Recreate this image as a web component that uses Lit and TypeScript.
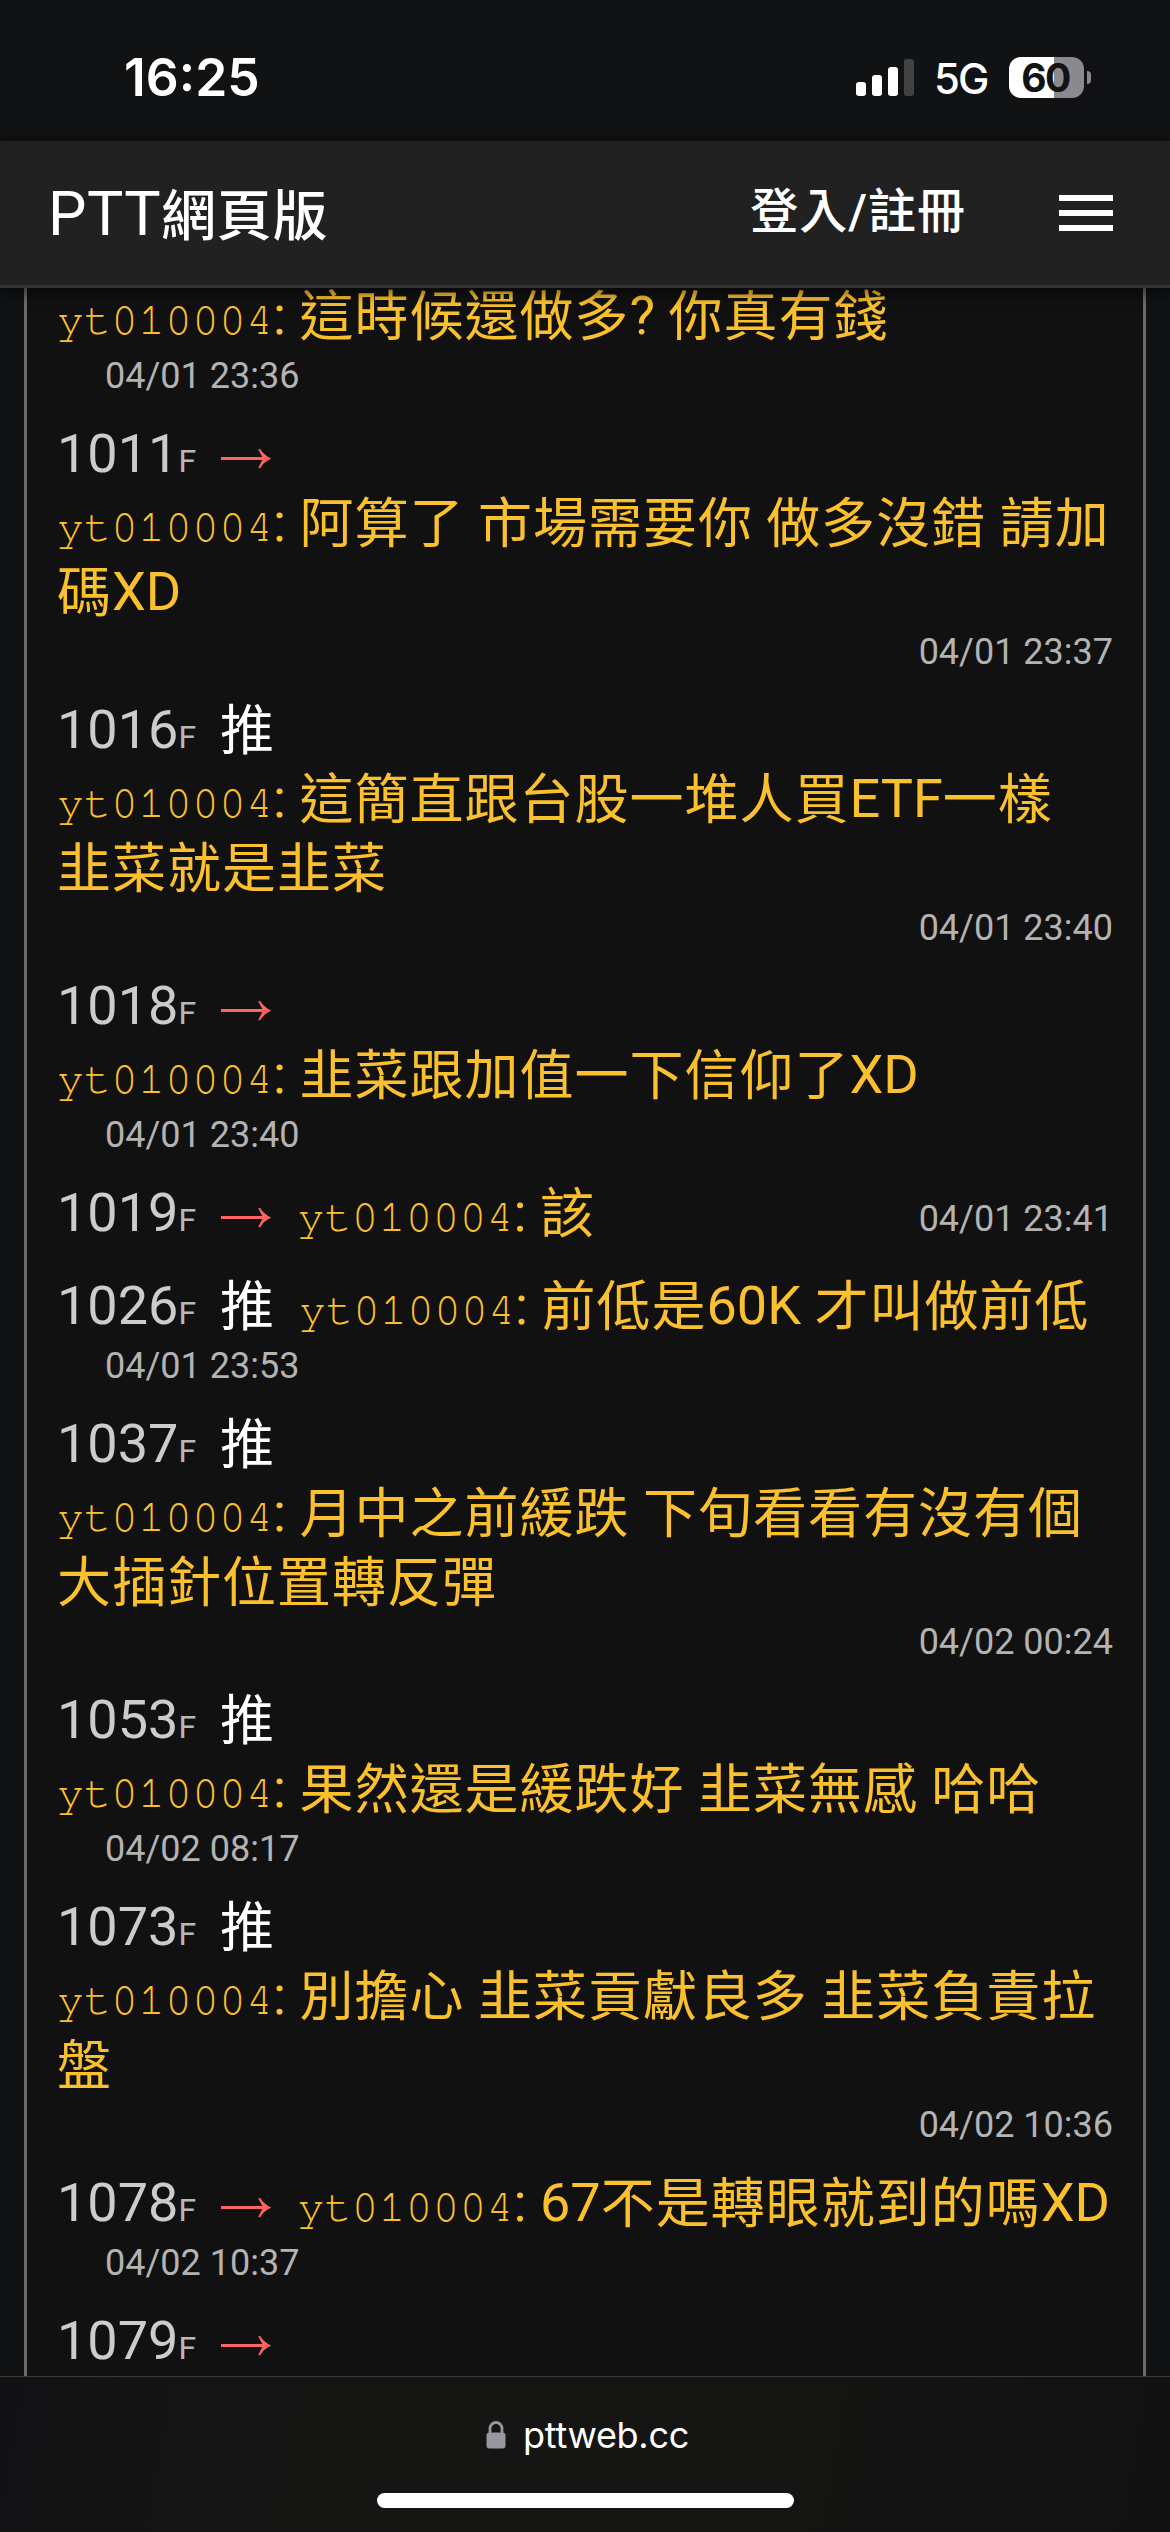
import { LitElement, html, css, svg } from "lit";
import { customElement, property } from "lit/decorators.js";
import { classMap } from "lit/directives/class-map.js";

type Entry = { floor?: string; kind?: "push" | "arrow"; inline?: boolean; lines: string[]; date: string; dateAt: "left" | "right" | "same" };

const USER = "yt010004";
const ENTRIES: Entry[] = [
  { lines: ["這時候還做多? 你真有錢"], date: "04/01 23:36", dateAt: "left" },
  { floor: "1011", kind: "arrow", lines: ["阿算了 市場需要你 做多沒錯 請加", "碼XD"], date: "04/01 23:37", dateAt: "right" },
  { floor: "1016", kind: "push", lines: ["這簡直跟台股一堆人買ETF一樣", "韭菜就是韭菜"], date: "04/01 23:40", dateAt: "right" },
  { floor: "1018", kind: "arrow", lines: ["韭菜跟加值一下信仰了XD"], date: "04/01 23:40", dateAt: "left" },
  { floor: "1019", kind: "arrow", inline: true, lines: ["該"], date: "04/01 23:41", dateAt: "same" },
  { floor: "1026", kind: "push", inline: true, lines: ["前低是60K 才叫做前低"], date: "04/01 23:53", dateAt: "left" },
  { floor: "1037", kind: "push", lines: ["月中之前緩跌 下旬看看有沒有個", "大插針位置轉反彈"], date: "04/02 00:24", dateAt: "right" },
  { floor: "1053", kind: "push", lines: ["果然還是緩跌好 韭菜無感 哈哈"], date: "04/02 08:17", dateAt: "left" },
  { floor: "1073", kind: "push", lines: ["別擔心 韭菜貢獻良多 韭菜負責拉", "盤"], date: "04/02 10:36", dateAt: "right" },
  { floor: "1078", kind: "arrow", inline: true, lines: ["67不是轉眼就到的嗎XD"], date: "04/02 10:37", dateAt: "left" },
  { floor: "1079", kind: "arrow", lines: [], date: "", dateAt: "left" },
];

/* Han runs are tracked slightly wider than the Latin text around them. */
const tracked = (text: string) =>
  text.split(/([\u4e00-\u9fff]+)/).filter(Boolean).map((run) =>
    /[\u4e00-\u9fff]/.test(run) ? html`<span class="han">${run}</span>` : run);

@customElement("status-bar")
class StatusBar extends LitElement {
  static styles = css`
    :host { display: flex; justify-content: space-between; height: 141px; box-sizing: border-box; padding: 57px 79px 0 124px; color: #fff; font-family: Inter, "Liberation Sans", sans-serif; }
    .time { font-size: 51.5px; font-weight: 600; line-height: 41px; }
    .right { display: flex; align-items: flex-start; }
    .signal { display: block; margin-right: 20px; }
    .net { width: 75px; font-size: 42px; font-weight: 500; line-height: 44px; letter-spacing: -2px; }
    .battery { display: flex; align-items: center; gap: 3px; }
    .cell { width: 75px; height: 41px; border-radius: 12px; background: linear-gradient(90deg, #fff 45px, #8a8a8c 45px); color: #111315; font-size: 39px; font-weight: 700; line-height: 41px; text-align: center; letter-spacing: -1.5px; text-indent: -2px; }
    .nub { width: 4px; height: 13px; border-radius: 0 4px 4px 0; background: #8a8a8c; }
  `;
  render() {
    const bars = [[0, 23, 14], [16, 16, 21], [32, 8, 29], [48, 0, 37]];
    return html`
      <div class="time">16:25</div>
      <div class="right">
        <svg class="signal" width="58" height="41" viewBox="0 -2 58 41">
          ${bars.map(([x, y, h], i) => svg`<rect x=${x} y=${y} width="10" height=${h} rx="3" fill=${i === 3 ? "#414244" : "#fff"}></rect>`)}
        </svg>
        <div class="net">5G</div>
        <div class="battery"><div class="cell">60</div><div class="nub"></div></div>
      </div>`;
  }
}

@customElement("site-header")
class SiteHeader extends LitElement {
  static styles = css`
    :host { display: flex; align-items: center; position: relative; z-index: 1; box-sizing: border-box; height: 147px; padding: 0 57px 0 48px; background: #212121; border-bottom: 3px solid #333; box-shadow: 0 3px 14px 2px rgba(0, 0, 0, 0.55); color: #fff; font-family: Roboto, "Noto Sans CJK TC", sans-serif; }
    .title { flex: 1; font-size: 61px; line-height: 70px; letter-spacing: 0.4px; padding-top: 2px; }
    .title .han { font-size: 55px; letter-spacing: 0.8px; font-weight: 500; line-height: 0; }
    .login { font-size: 48px; line-height: 56px; letter-spacing: 1px; font-weight: 500; padding-bottom: 3px; margin-right: 93px; }
    .menu { display: flex; flex-direction: column; gap: 9px; }
    .menu i { width: 54px; height: 6px; background: #fff; }
  `;
  render() {
    return html`
      <div class="title">PTT<span class="han">網頁版</span></div>
      <div class="login">登入/註冊</div>
      <div class="menu"><i></i><i></i><i></i></div>`;
  }
}

@customElement("comment-entry")
class CommentEntry extends LitElement {
  @property({ attribute: false }) entry!: Entry;
  static styles = css`
    :host { display: block; padding-bottom: 23px; }
    .line { display: flex; align-items: baseline; height: 69px; line-height: 69px; white-space: pre; color: #fbc02d; }
    .line.single { height: 70px; }
    .floor { width: 163px; color: #ccc; }
    .floor small { font-size: 32px; color: #b8b8b8; line-height: 0; }
    .tag { width: 79px; color: #fff; }
    .arrow { display: block; width: 52px; height: 23px; margin-right: 25.5px; }
    .user { width: 216px; font-family: FreeMono, "Liberation Mono", monospace; font-size: 45px; line-height: 0; }
    .han { letter-spacing: 1px; line-height: 0; vertical-align: -1.5px; }
    .date { color: #b3b3b3; font-size: 36px; line-height: 52px; height: 46px; }
    .left { padding-left: 48px; }
    .right { text-align: right; }
    .same { margin-left: auto; line-height: 0; height: auto; }
  `;
  render() {
    const e = this.entry;
    const single = e.dateAt === "same";
    const name = html`<span class="user">${USER}</span><span>: ${tracked(e.lines[0] ?? "")}</span>`;
    const tag = e.kind === "push"
      ? html`<span class="tag"><span class="han">推</span></span>`
      : html`<svg class="arrow" viewBox="0 0 52 23" role="img" aria-label="→">
          <path d="M1 8.1H42.3L38.2 0.2L40.2 0Q43.8 6.2 51.2 9.6Q43.8 13 40.2 19.2L38.2 19L42.3 11.1H1Z" fill="#ff6464"></path>
        </svg>`;
    return html`
      ${e.floor ? html`<div class=${classMap({ line: true, single })}><span class="floor">${e.floor}<small>F</small></span>${tag}${e.inline ? name : ""}${single ? html`<span class="date same">${e.date}</span>` : ""}</div>` : ""}
      ${!e.inline && e.lines.length ? html`<div class="line">${name}</div>` : ""}
      ${e.lines.slice(1).map((l) => html`<div class="line"><span>${tracked(l)}</span></div>`)}
      ${single ? "" : html`<div class="date ${e.dateAt}">${e.date}</div>`}`;
  }
}

@customElement("browser-bar")
class BrowserBar extends LitElement {
  static styles = css`
    :host { display: flex; flex-direction: column; align-items: center; position: relative; z-index: 1; box-sizing: border-box; height: 156px; padding-top: 35px; border-top: 1px solid #3a3a3b; background: linear-gradient(100deg, #121214, #151515 20%, #151513 60%, #121214); color: #fff; font-family: Inter, "Liberation Sans", sans-serif; }
    .url { display: flex; align-items: center; gap: 17px; height: 46px; font-size: 36px; line-height: 46px; letter-spacing: -0.3px; padding-left: 5px; }
    .home { width: 417px; height: 15px; border-radius: 8px; background: #fff; margin-top: 35px; }
  `;
  render() {
    return html`
      <div class="url">
        <svg width="20" height="28" viewBox="0 0 20 28">
          <rect x="0.5" y="11.5" width="19" height="16" rx="3" fill="#98979d"></rect>
          <path d="M4 13V7.5a6 6 0 0 1 12 0V13" fill="none" stroke="#98979d" stroke-width="2.8"></path>
        </svg>
        <span>pttweb.cc</span>
      </div>
      <div class="home"></div>`;
  }
}

@customElement("app-root")
class AppRoot extends LitElement {
  static styles = css`
    :host { display: flex; flex-direction: column; width: 1170px; height: 2532px; overflow: hidden; background: #101214; }
    .scroll { flex: 1; min-height: 0; overflow: hidden; display: flex; justify-content: center; }
    .list { box-sizing: border-box; width: 1122px; height: 2400px; margin-top: -7px; padding: 0 30px; border: 0 solid #6b6b6b; border-width: 0 3px; background: #111; font-family: Roboto, "Noto Sans CJK TC", sans-serif; font-size: 54px; }
  `;
  render() {
    return html`
      <status-bar></status-bar>
      <site-header></site-header>
      <div class="scroll"><div class="list">${ENTRIES.map((e) => html`<comment-entry .entry=${e}></comment-entry>`)}</div></div>
      <browser-bar></browser-bar>`;
  }
}
